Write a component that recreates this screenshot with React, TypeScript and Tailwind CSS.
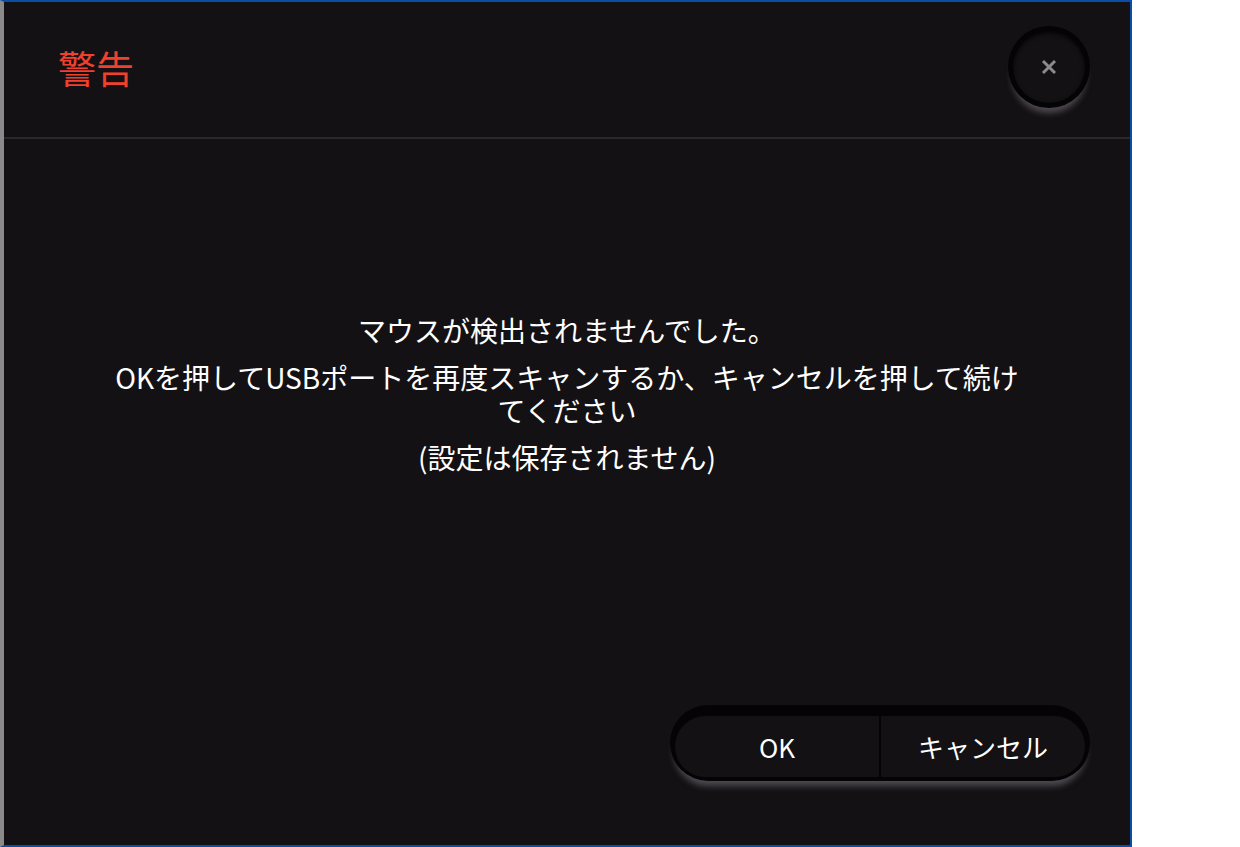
import React from 'react';

const jp = { fontFamily: '"Noto Sans CJK JP", "Noto Sans", sans-serif' };

function CloseButton() {
  return (
    <div className="w-[82px] h-[82px] rounded-full bg-[#040305] flex items-center justify-center shadow-[0_9px_6px_-4px_rgba(110,105,115,0.65)]">
      <div className="w-[72px] h-[72px] rounded-full bg-[#141114] flex items-center justify-center shadow-[inset_0_2px_4px_rgba(0,0,0,0.8)]">
        <svg width="16" height="16" viewBox="0 0 16 16">
          <path d="M2 2 L14 14 M14 2 L2 14" stroke="#8c8a90" strokeWidth="3" />
        </svg>
      </div>
    </div>
  );
}

function ButtonGroup() {
  return (
    <div className="rounded-full bg-[#040305] px-[5px] pt-[11px] pb-[4px] shadow-[0_9px_6px_-4px_rgba(110,105,115,0.65)]">
      <div className="flex h-[61px] w-[410px] rounded-full bg-[#141114] overflow-hidden text-white text-[26px]" style={jp}>
        <div className="flex-1 flex items-center justify-center">OK</div>
        <div className="w-[2px] bg-[#040305]" />
        <div className="flex-1 flex items-center justify-center">キャンセル</div>
      </div>
    </div>
  );
}

export default function App() {
  return (
    <div className="w-[1240px] h-[847px] bg-white flex">
      <div className="w-[1132px] h-[847px] bg-[#141114] border-t-2 border-b-2 border-r-2 border-[#0a4ea6] border-l-4 border-l-[#8a8a8a] flex flex-col">
        <div className="h-[135px] flex items-center justify-between pl-[54px] pr-[40px] pb-[6px]">
          <div className="text-[38px] text-[#f0402e] leading-none" style={jp}>警告</div>
          <CloseButton />
        </div>
        <div className="h-[2px] bg-[#2a282d]" />
        <div className="flex-1 flex flex-col">
          <div className="pt-[175px] flex flex-col items-center text-center text-white text-[28px] leading-[33px]" style={jp}>
            <div>マウスが検出されませんでした。</div>
            <div className="mt-[14px]">OKを押してUSBポートを再度スキャンするか、キャンセルを押して続け</div>
            <div>てください</div>
            <div className="mt-[14px]">(設定は保存されません)</div>
          </div>
          <div className="mt-auto flex justify-end pr-[40px] pb-[64px]">
            <ButtonGroup />
          </div>
        </div>
      </div>
    </div>
  );
}
